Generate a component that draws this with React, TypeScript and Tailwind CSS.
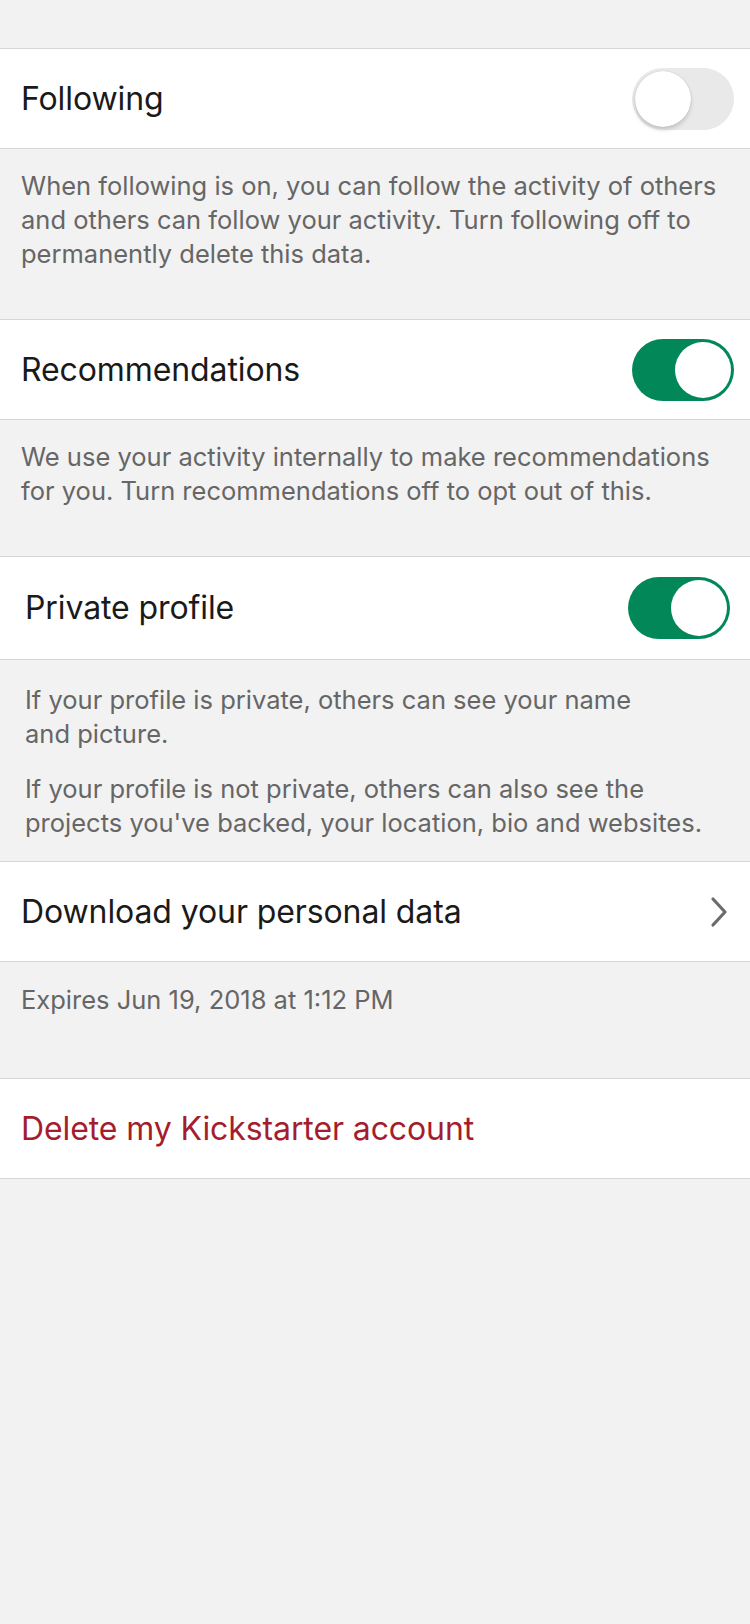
function Toggle({ on }: { on: boolean }) {
  if (on) {
    return (
      <div className="w-[102px] h-[62px] rounded-full bg-[#028858] flex items-center justify-end p-[3px]">
        <div className="w-[56px] h-[56px] rounded-full bg-white" />
      </div>
    );
  }
  return (
    <div className="w-[102px] h-[62px] rounded-full bg-[#e9e9e9] flex items-center justify-start p-[3px]">
      <div className="w-[56px] h-[56px] rounded-full bg-white shadow-[0_3px_4px_rgba(0,0,0,0.15),0_0_1px_rgba(0,0,0,0.25)]" />
    </div>
  );
}

function Row({ children, shift = false }: { children: React.ReactNode; shift?: boolean }) {
  return (
    <div
      className={`bg-white border-y border-[#d6d6d6] flex items-center justify-between ${
        shift ? 'h-[104px] pl-[25px] pr-[20px]' : 'h-[101px] pl-[21px] pr-[16px]'
      }`}
    >
      {children}
    </div>
  );
}

export default function App() {
  return (
    <div
      className="min-h-[1624px] bg-[#f2f2f2] text-[#1a1a1a]"
      style={{ fontFamily: 'Inter, "Noto Sans", sans-serif' }}
    >
      <div className="h-[48px]" />

      <Row>
        <span className="text-[32px] tracking-[-0.1px]">Following</span>
        <Toggle on={false} />
      </Row>
      <div className="pl-[21px] pr-[10px] pt-[20px] pb-[48px] text-[25.5px] leading-[34px] text-[#666666]">
        When following is on, you can follow the activity of others
        <br />
        and others can follow your activity. Turn following off to
        <br />
        permanently delete this data.
      </div>

      <Row>
        <span className="text-[32px] tracking-[-0.1px]">Recommendations</span>
        <Toggle on />
      </Row>
      <div className="pl-[21px] pr-[10px] pt-[20px] pb-[48px] text-[25.5px] leading-[34px] text-[#666666]">
        We use your activity internally to make recommendations
        <br />
        for you. Turn recommendations off to opt out of this.
      </div>

      <Row shift>
        <span className="text-[32px] tracking-[-0.1px]">Private profile</span>
        <Toggle on />
      </Row>
      <div className="pl-[25px] pr-[10px] pt-[23px] pb-[21px] text-[25.5px] leading-[34px] text-[#666666] flex flex-col gap-[21px]">
        <p>
          If your profile is private, others can see your name
          <br />
          and picture.
        </p>
        <p>
          If your profile is not private, others can also see the
          <br />
          projects you've backed, your location, bio and websites.
        </p>
      </div>

      <Row>
        <span className="text-[32px] tracking-[-0.1px]">Download your personal data</span>
        <svg width="20" height="32" viewBox="0 0 20 32" fill="none" className="mr-[5px]">
          <path d="M4 3 L16 16 L4 29" stroke="#6b6b6b" strokeWidth="3.2" strokeLinecap="round" strokeLinejoin="round" />
        </svg>
      </Row>
      <div className="pl-[21px] pr-[10px] pt-[21px] pb-[61px] text-[25.5px] leading-[34px] text-[#666666]">
        Expires Jun 19, 2018 at 1:12 PM
      </div>

      <Row>
        <span className="text-[32px] tracking-[-0.1px] text-[#a51d2d]">Delete my Kickstarter account</span>
      </Row>
    </div>
  );
}
